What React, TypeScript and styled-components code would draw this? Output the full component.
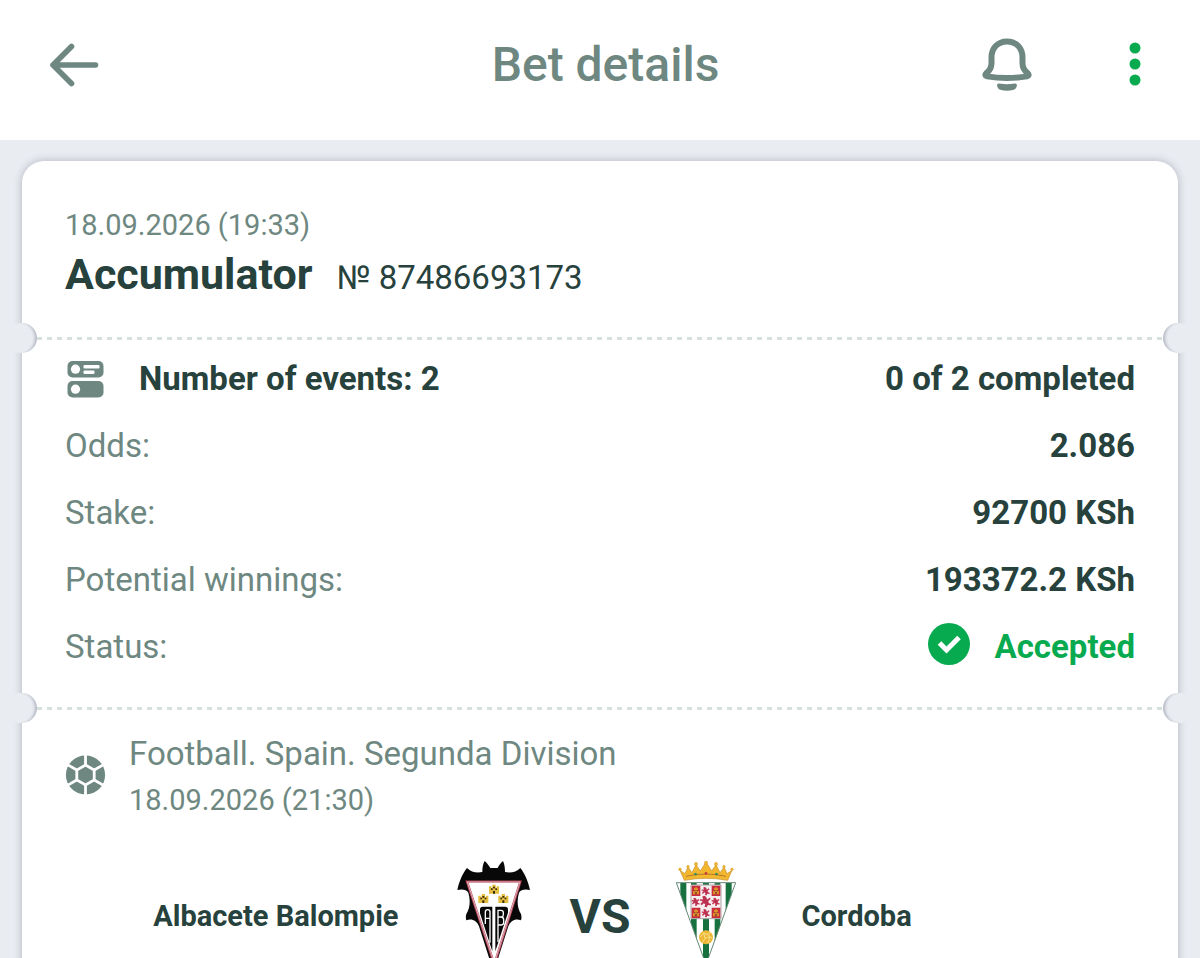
import React from 'react'
import styled, { createGlobalStyle } from 'styled-components'

const colors = {
  page: '#e9ecf1',
  card: '#ffffff',
  text: '#27423d',
  muted: '#6e8881',
  accent: '#08aa50',
  dash: '#d5e0df',
}

const GlobalStyle = createGlobalStyle`
  * {
    box-sizing: border-box;
  }
  body {
    margin: 0;
    background: ${colors.page};
    color: ${colors.text};
    font-family: Roboto, 'Liberation Sans', sans-serif;
  }
`

const Page = styled.div`
  display: flex;
  flex-direction: column;
  height: 100vh;
`

const Header = styled.header`
  display: grid;
  grid-template-columns: 1fr auto 1fr;
  align-items: center;
  flex: none;
  padding: 35px 39px 45px 50px;
  background: ${colors.card};
`

const Title = styled.h1`
  margin: 0;
  font-size: 48px;
  line-height: 60px;
  font-weight: 500;
  color: ${colors.muted};
`

const Actions = styled.div`
  display: flex;
  justify-content: flex-end;
  gap: 76px;
`

const IconButton = styled.button<{ $accent?: boolean }>`
  display: flex;
  align-items: center;
  justify-content: center;
  width: 52px;
  height: 60px;
  padding: 0;
  border: 0;
  background: none;
  color: ${({ $accent }) => ($accent ? colors.accent : colors.muted)};
  cursor: pointer;
`

const Content = styled.main`
  flex: 1;
  overflow-y: auto;
  scrollbar-width: none;
  padding: 21px 22px;
`

const Card = styled.article`
  background: ${colors.card};
  border-radius: 22px;
  box-shadow: 0 0 8px rgba(60, 65, 85, 0.32);
`

const Section = styled.section`
  padding: 0 43px;
`

const Summary = styled(Section)`
  padding-top: 46px;
  padding-bottom: 14px;
`

const DateText = styled.time`
  display: block;
  font-size: 29px;
  line-height: 36px;
  color: ${colors.muted};
`

const BetTitle = styled.div`
  display: flex;
  align-items: baseline;
  gap: 24px;
  line-height: 62px;
`

const BetType = styled.h2`
  margin: 0;
  font-size: 43px;
  font-weight: 700;
`

const BetNumber = styled.span`
  font-size: 33px;
`

const Divider = styled.div`
  display: flex;
  align-items: center;
  justify-content: space-between;
  margin: 0 -8px;
`

const Notch = styled.span<{ $side: 'left' | 'right' }>`
  width: 23px;
  height: 30px;
  background: ${colors.page};
  border-radius: ${({ $side }) => ($side === 'left' ? '0 15px 15px 0' : '15px 0 0 15px')};
  box-shadow: inset ${({ $side }) => ($side === 'left' ? '-4px' : '4px')} 0 3px -2px rgba(60, 65, 85, 0.3);
`

const Dashes = styled.span`
  flex: 1;
  height: 3px;
  background: repeating-linear-gradient(to right, ${colors.dash} 0 5px, transparent 5px 10px);
`

const Rows = styled.dl`
  margin: 0;
  padding: 0 43px 13px;
`

const Row = styled.div`
  display: flex;
  align-items: center;
  justify-content: space-between;
  height: 67px;
  font-size: 33px;

  &:first-child {
    margin-top: -8px;
  }
`

const Label = styled.dt<{ $strong?: boolean }>`
  display: flex;
  align-items: center;
  gap: 32px;
  font-weight: ${({ $strong }) => ($strong ? 700 : 400)};
  color: ${({ $strong }) => ($strong ? colors.text : colors.muted)};
`

const Value = styled.dd<{ $accepted?: boolean }>`
  display: flex;
  align-items: center;
  gap: 24px;
  margin: 0;
  font-weight: 700;
  color: ${({ $accepted }) => ($accepted ? colors.accent : colors.text)};
`

const League = styled.div`
  display: flex;
  align-items: center;
  gap: 22px;
  padding-top: 3px;
`

const LeagueName = styled.h3`
  margin: 0;
  font-size: 33px;
  line-height: 56px;
  font-weight: 400;
  color: ${colors.muted};
`

const Match = styled.div`
  display: grid;
  grid-template-columns: 1fr auto auto auto 1fr;
  align-items: center;
  padding: 43px 0;
`

const Team = styled.span<{ $home?: boolean }>`
  padding: 0 55px;
  font-size: 29px;
  font-weight: 700;
  text-align: ${({ $home }) => ($home ? 'right' : 'left')};
`

const Versus = styled.span`
  padding: 0 36px;
  font-size: 48px;
  font-weight: 700;
`

const BackIcon = () => (
  <svg width="52" height="60" viewBox="0 0 52 60" fill="none" stroke="currentColor" strokeWidth="5.600" strokeLinecap="round" strokeLinejoin="round">
    <path d="M45.500 30H3M21.500 11.500 3 30l18.500 18.500" />
  </svg>
)

const BellIcon = () => (
  <svg width="52" height="60" viewBox="0 0 52 60" fill="none">
    <path
      d="M26 6.400C16.500 6.400 10.500 13.500 10.500 22.500V28c0 5-1.500 7.500-5 10-1.800 1.600-1.200 3 .6 3.400 12 2 27.800 2 39.800 0 1.800-.4 2.400-1.800.6-3.400-3.500-2.500-5-5-5-10v-5.500C41.500 13.500 35.500 6.400 26 6.400z"
      stroke="currentColor"
      strokeWidth="6"
      strokeLinejoin="round"
    />
    <path d="M18.500 48.500c5 .9 10 .9 15 0 2-.2 2.800.9 2.300 2.700-.4 1.500-1.500 3-3 3.600-4.300 1.300-9.300 1.300-13.600 0-1.500-.6-2.600-2.100-3-3.600-.5-1.800.3-2.900 2.300-2.700z" fill="currentColor" />
  </svg>
)

const MoreIcon = () => (
  <svg width="12" height="60" viewBox="0 0 12 60" fill="currentColor">
    <circle cx="6" cy="13" r="5.500" />
    <circle cx="6" cy="29" r="5.500" />
    <circle cx="6" cy="45" r="5.500" />
  </svg>
)

const EventsIcon = () => (
  <svg width="42" height="38" viewBox="0 0 42 38">
    <rect x="2.500" y="1" width="36" height="16.500" rx="5" fill={colors.muted} />
    <rect x="2.500" y="21" width="36" height="16.500" rx="5" fill={colors.muted} />
    <g fill="#fff">
      <circle cx="10.500" cy="9.200" r="4.600" />
      <circle cx="10.500" cy="29.200" r="4.600" />
      <rect x="18.500" y="5" width="16" height="3.400" rx="1" />
      <rect x="18.500" y="10.500" width="11" height="3.400" rx="1" />
    </g>
  </svg>
)

const AcceptedIcon = () => (
  <svg width="42" height="48" viewBox="0 0 42 48">
    <circle cx="21" cy="21" r="21" fill={colors.accent} />
    <path d="m11.500 20 7 7L31 14.500" fill="none" stroke="#fff" strokeWidth="5" />
  </svg>
)

const BallIcon = () => (
  <svg width="42" height="48" viewBox="0 -6 42 48">
    <circle cx="20.500" cy="21" r="19.600" fill={colors.muted} />
    <path d="M20.500 11 29.200 16v10l-8.700 5-8.700-5V16z" fill="none" stroke="#fff" strokeWidth="2.800" />
    <path
      d="M20.500 11V0M29.200 16 39 10.400M29.200 26 39 31.600M20.500 31V42M11.800 26 2 31.600M11.800 16 2 10.400"
      stroke="#fff"
      strokeWidth="2.800"
    />
  </svg>
)

const AlbaceteCrest = () => (
  <svg width="80" height="110" viewBox="42 33 240 330" role="img" aria-label="Albacete Balompie crest">
    <path
      d="M134 33c7 6 12 13 17 21h22c4-8 9-15 16-21 4 9 6 19 6 33 17 4 34 0 46-12 13 16 24 40 29 66-14-4-28-1-33 8-7 22-5 48 6 64 2 7 2 13 0 19-16-6-31 0-38 18l-37 116h-14L117 229c-7-18-22-24-38-18-2-6-2-12 0-19 11-16 13-42 6-64-5-9-19-12-33-8 5-26 16-50 29-66 12 12 29 16 46 12 0-14 2-24 7-33z"
      fill="#080808"
    />
    <path d="M81 95h160l-78 248z" fill="#fff" stroke="#b6495c" strokeWidth="7" />
    <path d="M82 96h158l-77 244z" fill="none" stroke="#f3dfe2" strokeWidth="2" />
    {[
      [162, 118],
      [130, 146],
      [190, 146],
    ].map(([x, y]) => (
      <g key={`${x}-${y}`} transform={`translate(${x} ${y})`}>
        <path d="M-15-9h7v4h3v-9H5v9h3v-4h7v22h-30z" fill="#e2bd3e" />
        <path d="M-9-3h5v5h-5zM4-3h5v5H4zM-3-8h6v5h-6zM-3 13V5h6v8z" fill="#3d2c10" />
      </g>
    ))}
    <path d="M120 190v-12q0-8 8-8h29v134zM166 304V170h29q9 0 9 8v10z" fill="#080808" />
    <path
      d="M136 222v-36q0-7 7-7t7 7v92M136 205h14M174 276v-95h9q7 0 7 7v6q0 6-6 7 7 1 7 8v8q0 8-7 8h-9M174 201h10"
      fill="none"
      stroke="#fff"
      strokeWidth="4"
    />
  </svg>
)

const CordobaCrest = () => (
  <svg width="80" height="110" viewBox="20 33 240 330" role="img" aria-label="Cordoba crest">
    <defs>
      <clipPath id="cordoba-shield">
        <path d="M51 98h178l-89 246z" />
      </clipPath>
    </defs>
    <path
      d="M75 91 62 61l15 10 9-20 12 17 12-24 13 19 17-27 17 27 13-19 12 24 12-17 9 20 15-10-13 30q-65-12-130 0z"
      fill="#f2b72f"
      stroke="#c58e25"
      strokeWidth="2"
    />
    <g fill="#f2b72f" stroke="#c58e25">
      <circle cx="62" cy="58" r="4" />
      <circle cx="86" cy="50" r="4" />
      <circle cx="110" cy="42" r="5" />
      <circle cx="140" cy="38" r="5" />
      <circle cx="170" cy="42" r="5" />
      <circle cx="194" cy="50" r="4" />
      <circle cx="218" cy="58" r="4" />
    </g>
    <path d="M80 79q60-14 120 0" fill="none" stroke="#b77929" strokeWidth="3" />
    <path d="M105 69h7v7h-7zM168 69h7v7h-7z" fill="#2d8a61" />
    <circle cx="140" cy="70" r="4" fill="#c43a3a" />
    <g clipPath="url(#cordoba-shield)">
      <path d="M51 98h178v246H51z" fill="#fff" />
      <path d="M63 98h18v246H63zM95 98h17v246H95zM131 98h18v246h-18zM166 98h17v246h-17zM199 98h18v246h-18z" fill="#16713f" />
    </g>
    <path d="M51 98h178l-89 246z" fill="none" stroke="#648876" strokeWidth="3" />
    <path d="M95 105h90v101H95z" fill="#f7eef0" stroke="#a9a3a8" strokeWidth="3" />
    <path d="M97 107h26v31H97zM157 107h26v31h-26zM97 173h26v31H97zM157 173h26v31h-26z" fill="#c92d3c" />
    {[
      [110, 122],
      [170, 122],
      [110, 188],
      [170, 188],
    ].map(([x, y]) => (
      <g key={`${x}-${y}`} transform={`translate(${x} ${y})`}>
        <path d="M-9 11V1h3v-9h4v-3h4v3h4v9h3v10z" fill="#dc8e2b" />
        <path d="M-5-2h3v4h-3zM2-2h3v4H2zM-2 11V4h4v7z" fill="#7b2c2a" />
      </g>
    ))}
    {[
      [140, 123, 0.8],
      [110, 155, 0.8],
      [140, 154, 1.1],
      [170, 155, 0.8],
      [140, 189, 0.8],
    ].map(([x, y, s]) => (
      <path
        key={`${x}-${y}`}
        transform={`translate(${x} ${y}) scale(${s})`}
        d="m-10-13 6-2 5 4 2 6 7-5 3 3-7 7 2 5 6 2-1 4-8-1-3 6-6-1 2-7-4-3-6 6-3-4 6-7-8-2 1-4 8 1z"
        fill="#bd3150"
      />
    ))}
    <circle cx="140" cy="262" r="21" fill="#edb735" />
    <path d="m122 262 11-13 11 4 12-7M133 249l4 16-8 13M137 265l15-5 7 6M144 253l8 7-6 19" fill="none" stroke="#fae08a" strokeWidth="3" />
  </svg>
)

const details = [
  { label: 'Odds:', value: '2.086' },
  { label: 'Stake:', value: '92700 KSh' },
  { label: 'Potential winnings:', value: '193372.2 KSh' },
]

const TicketDivider = () => (
  <Divider>
    <Notch $side="left" />
    <Dashes />
    <Notch $side="right" />
  </Divider>
)

function App() {
  return (
    <Page>
      <GlobalStyle />
      <Header>
        <IconButton aria-label="Back">
          <BackIcon />
        </IconButton>
        <Title>Bet details</Title>
        <Actions>
          <IconButton aria-label="Notifications">
            <BellIcon />
          </IconButton>
          <IconButton $accent aria-label="More">
            <MoreIcon />
          </IconButton>
        </Actions>
      </Header>
      <Content>
        <Card>
          <Summary>
            <DateText>18.09.2026 (19:33)</DateText>
            <BetTitle>
              <BetType>Accumulator</BetType>
              <BetNumber>№ 87486693173</BetNumber>
            </BetTitle>
          </Summary>
          <TicketDivider />
          <Rows>
            <Row>
              <Label $strong>
                <EventsIcon />
                Number of events: 2
              </Label>
              <Value>0 of 2 completed</Value>
            </Row>
            {details.map(({ label, value }) => (
              <Row key={label}>
                <Label>{label}</Label>
                <Value>{value}</Value>
              </Row>
            ))}
            <Row>
              <Label>Status:</Label>
              <Value $accepted>
                <AcceptedIcon />
                Accepted
              </Value>
            </Row>
          </Rows>
          <TicketDivider />
          <Section>
            <League>
              <BallIcon />
              <div>
                <LeagueName>Football. Spain. Segunda Division</LeagueName>
                <DateText>18.09.2026 (21:30)</DateText>
              </div>
            </League>
            <Match>
              <Team $home>Albacete Balompie</Team>
              <AlbaceteCrest />
              <Versus>VS</Versus>
              <CordobaCrest />
              <Team>Cordoba</Team>
            </Match>
          </Section>
        </Card>
      </Content>
    </Page>
  )
}

export default App
